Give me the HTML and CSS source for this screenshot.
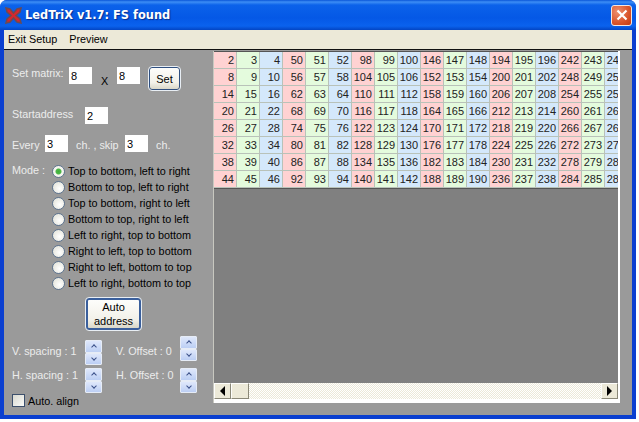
FILE: index.html
```html
<!DOCTYPE html>
<html lang="en">
<head>
  <meta charset="UTF-8">
  <title>LedTriX v1.7: FS found</title>
  <link rel="stylesheet" href="styles.css">
</head>
<body>
  <div class="window">
    <div class="titlebar">
      <svg class="app-icon" width="17" height="17" viewBox="0 0 17 17">
        <path d="M1 1 L5 2 L8.500 6 L12 2 L16 1 L15 5 L11 8.500 L15 12 L16 16 L12 15 L8.500 11 L5 15 L1 16 L2 12 L6 8.500 L2 5 Z" fill="#d8262c" stroke="#6e4a50" stroke-width="1.500"/>
      </svg>
      <span class="title-text">LedTriX v1.7: FS found</span>
      <div class="close-btn">
        <svg width="12" height="12" viewBox="0 0 12 12">
          <path d="M1.500 1.500 L10.500 10.500 M10.500 1.500 L1.500 10.500" stroke="#fff" stroke-width="2.200"/>
        </svg>
      </div>
    </div>
    <div class="menubar">
      <span class="menu-item">Exit Setup</span>
      <span class="menu-item">Preview</span>
    </div>

    <div class="content">
      <div class="panel">
        <div class="row matrix-row">
          <span class="label matrix-label">Set matrix:</span>
          <input class="num" type="text" value="8">
          <span class="times">X</span>
          <input class="num" type="text" value="8">
          <button class="btn set-btn">Set</button>
        </div>
        <div class="row start-row">
          <span class="label start-label">Startaddress</span>
          <input class="num" type="text" value="2">
        </div>
        <div class="row every-row">
          <span class="label every-label">Every</span>
          <input class="num" type="text" value="3">
          <span class="label ch-label">ch. , skip</span>
          <input class="num" type="text" value="3">
          <span class="label ch-end">ch.</span>
        </div>

        <div class="mode-block">
          <span class="label mode-label">Mode :</span>
          <div class="mode-list">
            <label class="mode"><input type="radio" name="mode" checked>Top to bottom, left to right</label>
            <label class="mode"><input type="radio" name="mode">Bottom to top, left to right</label>
            <label class="mode"><input type="radio" name="mode">Top to bottom, right to left</label>
            <label class="mode"><input type="radio" name="mode">Bottom to top, right to left</label>
            <label class="mode"><input type="radio" name="mode">Left to right, top to bottom</label>
            <label class="mode"><input type="radio" name="mode">Right to left, top to bottom</label>
            <label class="mode"><input type="radio" name="mode">Right to left, bottom to top</label>
            <label class="mode"><input type="radio" name="mode">Left to right, bottom to top</label>
          </div>
        </div>

        <button class="btn auto-btn">Auto<br>address</button>

        <div class="spin-row first">
          <span class="label spin-label">V. spacing : 1</span>
          <div class="spinner low"><button class="up"></button><button class="down"></button></div>
          <span class="label offset-label">V. Offset : 0</span>
          <div class="spinner"><button class="up"></button><button class="down"></button></div>
        </div>
        <div class="spin-row second">
          <span class="label spin-label">H. spacing : 1</span>
          <div class="spinner"><button class="up"></button><button class="down"></button></div>
          <span class="label offset-label">H. Offset : 0</span>
          <div class="spinner"><button class="up"></button><button class="down"></button></div>
        </div>

        <label class="align-check"><input type="checkbox">Auto. align</label>
      </div>

      <div class="grid-box">
        <div class="grid-clip">
          <table class="matrix">
            <tr><td>2</td><td>3</td><td>4</td><td>50</td><td>51</td><td>52</td><td>98</td><td>99</td><td>100</td><td>146</td><td>147</td><td>148</td><td>194</td><td>195</td><td>196</td><td>242</td><td>243</td><td>244</td></tr>
            <tr><td>8</td><td>9</td><td>10</td><td>56</td><td>57</td><td>58</td><td>104</td><td>105</td><td>106</td><td>152</td><td>153</td><td>154</td><td>200</td><td>201</td><td>202</td><td>248</td><td>249</td><td>250</td></tr>
            <tr><td>14</td><td>15</td><td>16</td><td>62</td><td>63</td><td>64</td><td>110</td><td>111</td><td>112</td><td>158</td><td>159</td><td>160</td><td>206</td><td>207</td><td>208</td><td>254</td><td>255</td><td>256</td></tr>
            <tr><td>20</td><td>21</td><td>22</td><td>68</td><td>69</td><td>70</td><td>116</td><td>117</td><td>118</td><td>164</td><td>165</td><td>166</td><td>212</td><td>213</td><td>214</td><td>260</td><td>261</td><td>262</td></tr>
            <tr><td>26</td><td>27</td><td>28</td><td>74</td><td>75</td><td>76</td><td>122</td><td>123</td><td>124</td><td>170</td><td>171</td><td>172</td><td>218</td><td>219</td><td>220</td><td>266</td><td>267</td><td>268</td></tr>
            <tr><td>32</td><td>33</td><td>34</td><td>80</td><td>81</td><td>82</td><td>128</td><td>129</td><td>130</td><td>176</td><td>177</td><td>178</td><td>224</td><td>225</td><td>226</td><td>272</td><td>273</td><td>274</td></tr>
            <tr><td>38</td><td>39</td><td>40</td><td>86</td><td>87</td><td>88</td><td>134</td><td>135</td><td>136</td><td>182</td><td>183</td><td>184</td><td>230</td><td>231</td><td>232</td><td>278</td><td>279</td><td>280</td></tr>
            <tr><td>44</td><td>45</td><td>46</td><td>92</td><td>93</td><td>94</td><td>140</td><td>141</td><td>142</td><td>188</td><td>189</td><td>190</td><td>236</td><td>237</td><td>238</td><td>284</td><td>285</td><td>286</td></tr>
          </table>
        </div>
        <div class="hscroll">
          <div class="sb-btn"><span class="arrow-left"></span></div>
          <div class="sb-btn sb-thumb"></div>
          <div class="sb-track"></div>
          <div class="sb-btn"><span class="arrow-right"></span></div>
        </div>
      </div>
    </div>
  </div>
</body>
</html>
```

FILE: styles.css
```css
html, body {
  margin: 0;
  padding: 0;
  background: #fff;
  overflow: hidden;
}
body {
  font-family: "Liberation Sans", Arial, sans-serif;
  font-size: 10.800px;
  color: #000;
}
.window {
  width: 636px;
  height: 419px;
  display: flex;
  flex-direction: column;
  box-sizing: border-box;
  background: #0b3fd0;
  border-radius: 7px 7px 0 0;
  overflow: hidden;
}

/* title bar */
.titlebar {
  height: 30px;
  flex: none;
  display: flex;
  align-items: center;
  padding: 0 4px 0 5px;
  background: linear-gradient(to bottom, #0a56d8 0, #3d8ef5 2px, #0b62ea 5px, #0558e6 18px, #0a62ee 26px, #0345c4 30px);
}
.app-icon {
  flex: none;
  margin-top: 1px;
}
.title-text {
  margin-left: 3px;
  font-family: "DejaVu Sans", Verdana, sans-serif;
  font-weight: bold;
  font-size: 11.400px;
  color: #fff;
  text-shadow: 1px 1px 1px #0a2f90;
}
.close-btn {
  width: 19px;
  height: 19px;
  margin-left: auto;
  display: flex;
  align-items: center;
  justify-content: center;
  border: 1px solid #f4e6e0;
  border-radius: 3px;
  background: radial-gradient(circle at 30% 30%, #ee9070, #d9542a 60%, #c23a12);
}

/* menu */
.menubar {
  height: 19px;
  flex: none;
  margin: 0 4px;
  padding-left: 4px;
  display: flex;
  align-items: center;
  background: #ece9d8;
  border-bottom: 1px solid #111;
}
.menu-item {
  margin-right: 12px;
  position: relative;
  top: -1px;
}

/* main area */
.content {
  flex: 1;
  display: flex;
  margin: 0 4px 4px;
  background: #9a9a9a;
}
.panel {
  width: 209px;
  flex: none;
  box-sizing: border-box;
  padding: 16px 0 0 8px;
}
.label {
  color: #ececec;
  line-height: 14px;
  white-space: nowrap;
}
.row {
  display: flex;
  align-items: flex-start;
}
input.num {
  width: 23px;
  height: 17px;
  flex: none;
  box-sizing: border-box;
  margin: 0;
  padding: 0 0 0 2px;
  border: none;
  background: #fff;
  font: 11px "Liberation Sans", Arial, sans-serif;
  color: #000;
  outline: none;
}
.matrix-row { height: 25px; }
.matrix-row input.num { margin-top: 1px; }
.matrix-label { width: 57px; }
.times {
  width: 25px;
  margin-top: 8px;
  text-align: center;
  line-height: 14px;
}
.btn {
  font: 11px "Liberation Sans", Arial, sans-serif;
  color: #000;
  padding: 0;
  box-sizing: border-box;
  background: linear-gradient(to bottom, #fdfdfb, #f2f1e9 70%, #d9d7c8);
  border: 1px solid #2f4f80;
  border-radius: 3px;
  outline: 1px solid #e8eef4;
}
.set-btn {
  width: 31px;
  height: 23px;
  margin: 1px 0 0 9px;
}
.start-row {
  height: 17px;
  margin-top: 16px;
}
.start-label { width: 73px; }
.every-row {
  height: 17px;
  margin-top: 11px;
}
.every-row .label { padding-top: 3px; }
.every-label { width: 33px; }
.ch-label {
  width: 49px;
  padding-left: 8px;
}
.ch-end { padding-left: 8px; }

.mode-block {
  display: flex;
  margin-top: 11px;
}
.mode-label {
  width: 40px;
  flex: none;
}
.mode-list {
  display: flex;
  flex-direction: column;
}
.mode {
  height: 16px;
  display: flex;
  align-items: center;
  white-space: nowrap;
}
.mode input {
  appearance: none;
  width: 13px;
  height: 13px;
  flex: none;
  margin: 0 3px 0 0;
  border: 1px solid #5e7490;
  border-radius: 50%;
  background: radial-gradient(circle at 60% 60%, #fff, #e8e8e0 70%, #cfcfc6);
}
.mode input:checked {
  background: radial-gradient(circle, #3fae3a 0, #4cb848 2.500px, #f4f4ee 3.500px);
}

.auto-btn {
  display: block;
  width: 55px;
  height: 32px;
  margin: 7px 0 0 74px;
  line-height: 14px;
  border: 2px solid #3a5f9c;
}

/* spacing rows */
.spin-row {
  display: flex;
  align-items: flex-start;
}
.spin-row.first {
  height: 29px;
  margin-top: 6px;
}
.spin-row.second {
  height: 25px;
  margin-top: 3px;
}
.spin-row.first .label { margin-top: 8px; }
.spin-label { width: 73px; }
.offset-label {
  width: 64px;
  padding-left: 14px;
  box-sizing: content-box;
}
.spinner {
  width: 17px;
  flex: none;
  display: flex;
  flex-direction: column;
}
.spinner.low { margin-top: 4px; }
.spinner button {
  width: 17px;
  height: 12.500px;
  padding: 0;
  margin: 0;
  display: flex;
  align-items: center;
  justify-content: center;
  border: 1px solid #e6ecf6;
  border-radius: 1px;
  background: linear-gradient(to bottom, #dfe8fb, #bccff4);
}
.spinner button::before {
  content: "";
  width: 3px;
  height: 3px;
  border-left: 1.500px solid #3a4f88;
  border-top: 1.500px solid #3a4f88;
}
.spinner .up::before {
  transform: translateY(1px) rotate(45deg);
}
.spinner .down::before {
  transform: translateY(-1px) rotate(225deg);
}

.align-check {
  display: flex;
  align-items: center;
  height: 13px;
  margin-top: 1px;
  white-space: nowrap;
}
.align-check input {
  appearance: none;
  width: 13px;
  height: 13px;
  margin: 0 3px 0 0;
  border: 1px solid #3c4f6c;
  background: linear-gradient(135deg, #d8d8d0, #fbfbf8);
}

/* grid on the right */
.grid-box {
  width: 407px;
  height: 352px;
  flex: none;
  margin-top: 1px;
  box-sizing: border-box;
  padding: 0 2px 4px 0;
  background: #fff;
  display: flex;
  flex-direction: column;
  border-left: 1px solid #c8c8c0;
}
.grid-clip {
  flex: 1;
  background: #808080;
  overflow: hidden;
  border-top: 1px solid #555;
}
.matrix {
  border-collapse: separate;
  border-spacing: 0;
  table-layout: fixed;
  width: 414px;
  border-bottom: 1px solid #555;
}
.matrix td {
  width: 23px;
  height: 17px;
  padding: 0 2px 0 0;
  box-sizing: border-box;
  text-align: right;
  white-space: nowrap;
  overflow: hidden;
  line-height: 14px;
  font-size: 11px;
  color: #222;
  border-right: 1px solid #b9c2b9;
  border-bottom: 1px solid #b9c2b9;
}
.matrix td:nth-child(3n+1) { background: #ffd2d2; }
.matrix td:nth-child(3n+2) { background: #e4fbdd; }
.matrix td:nth-child(3n) { background: #d4e8fb; }

.hscroll {
  height: 16px;
  flex: none;
  display: flex;
  background: #fff;
}
.sb-btn {
  width: 17px;
  flex: none;
  box-sizing: border-box;
  display: flex;
  align-items: center;
  justify-content: center;
  background: #ece9d8;
  border: 1px solid;
  border-color: #fdfdfb #8a8878 #8a8878 #fdfdfb;
}
.sb-thumb { width: 18px; }
.sb-track {
  flex: 1;
  background: repeating-conic-gradient(#ece9d8 0 25%, #fff 0 50%) 0 0 / 2px 2px;
}
.arrow-left {
  border-top: 5px solid transparent;
  border-bottom: 5px solid transparent;
  border-right: 5px solid #000;
}
.arrow-right {
  border-top: 5px solid transparent;
  border-bottom: 5px solid transparent;
  border-left: 5px solid #000;
}
```
